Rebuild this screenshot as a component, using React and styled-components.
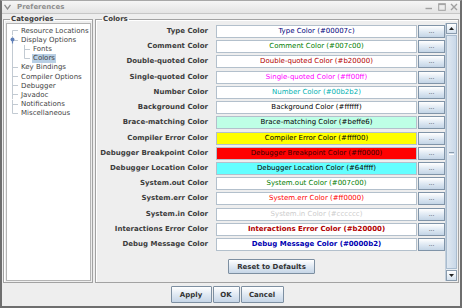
import React from "react";
import styled, { createGlobalStyle } from "styled-components";

const GlobalStyle = createGlobalStyle`
  html, body { margin: 0; padding: 0; background: #ffffff; }
  body { font-family: "DejaVu Sans", sans-serif; }
`;

const categories = [
  { label: "Resource Locations", level: 0, kind: "first" },
  { label: "Display Options", level: 0, kind: "mid", open: true },
  { label: "Fonts", level: 1, kind: "mid" },
  { label: "Colors", level: 1, kind: "last", selected: true },
  { label: "Key Bindings", level: 0, kind: "mid" },
  { label: "Compiler Options", level: 0, kind: "mid" },
  { label: "Debugger", level: 0, kind: "mid" },
  { label: "Javadoc", level: 0, kind: "mid" },
  { label: "Notifications", level: 0, kind: "mid" },
  { label: "Miscellaneous", level: 0, kind: "last" },
];

const colorRows = [
  { label: "Type Color", text: "Type Color (#00007c)", fg: "#00007c" },
  { label: "Comment Color", text: "Comment Color (#007c00)", fg: "#007c00" },
  { label: "Double-quoted Color", text: "Double-quoted Color (#b20000)", fg: "#b20000" },
  { label: "Single-quoted Color", text: "Single-quoted Color (#ff00ff)", fg: "#ff00ff" },
  { label: "Number Color", text: "Number Color (#00b2b2)", fg: "#00b2b2" },
  { label: "Background Color", text: "Background Color (#ffffff)", fg: "#000000" },
  { label: "Brace-matching Color", text: "Brace-matching Color (#beffe6)", fg: "#000000", bg: "#beffe6" },
  { label: "Compiler Error Color", text: "Compiler Error Color (#ffff00)", fg: "#000000", bg: "#ffff00" },
  { label: "Debugger Breakpoint Color", text: "Debugger Breakpoint Color (#ff0000)", fg: "#3a0000", bg: "#ff0000" },
  { label: "Debugger Location Color", text: "Debugger Location Color (#64ffff)", fg: "#000000", bg: "#64ffff" },
  { label: "System.out Color", text: "System.out Color (#007c00)", fg: "#007c00" },
  { label: "System.err Color", text: "System.err Color (#ff0000)", fg: "#ff0000" },
  { label: "System.in Color", text: "System.in Color (#cccccc)", fg: "#cccccc" },
  { label: "Interactions Error Color", text: "Interactions Error Color (#b20000)", fg: "#b20000", bold: true },
  { label: "Debug Message Color", text: "Debug Message Color (#0000b2)", fg: "#0000b2", bold: true },
];

const LINE = "#c2cad2";

function Connector({ kind }) {
  const top = kind === "first" ? 4.5 : 0;
  const bottom = kind === "last" ? 4.5 : 9.2;
  return (
    <svg width="12" height="9.2" viewBox="0 0 12 9.2">
      <line x1="5.5" y1={top} x2="5.5" y2={bottom} stroke={LINE} strokeWidth="1" />
      <line x1="5.5" y1="4.5" x2="11" y2="4.5" stroke={LINE} strokeWidth="1" />
    </svg>
  );
}

function Pass() {
  return (
    <svg width="12" height="9.2" viewBox="0 0 12 9.2">
      <line x1="5.5" y1="0" x2="5.5" y2="9.2" stroke={LINE} strokeWidth="1" />
    </svg>
  );
}

function OpenHandle() {
  return (
    <svg width="12" height="9.2" viewBox="0 0 12 9.2">
      <line x1="5.5" y1="0" x2="5.5" y2="9.2" stroke={LINE} strokeWidth="1" />
      <line x1="5.5" y1="4.5" x2="11" y2="4.5" stroke={LINE} strokeWidth="1" />
      <circle cx="5.5" cy="3.6" r="2" fill="#5f7fb8" />
      <line x1="5.5" y1="4" x2="5.5" y2="7.5" stroke="#5f7fb8" strokeWidth="1.2" />
    </svg>
  );
}

export default function App() {
  return (
    <>
      <GlobalStyle />
      <Window>
        <TitleBar>
          <TitleIcon>
            <svg width="7" height="6" viewBox="0 0 7 6">
              <polyline points="0.5,0.8 3.5,5 6.5,0.8" fill="none" stroke="#8c8c8c" strokeWidth="1.3" />
            </svg>
          </TitleIcon>
          <Title>Preferences</Title>
          <Controls>
            <svg width="8" height="8" viewBox="0 0 8 8">
              <line x1="0.5" y1="5.5" x2="7" y2="5.5" stroke="#a0a0a0" strokeWidth="1.4" />
            </svg>
            <svg width="8" height="8" viewBox="0 0 8 8">
              <rect x="0.7" y="0.7" width="6.6" height="6.6" fill="none" stroke="#a0a0a0" strokeWidth="1" />
              <line x1="0.7" y1="1.6" x2="7.3" y2="1.6" stroke="#a0a0a0" strokeWidth="1" />
            </svg>
            <svg width="8" height="8" viewBox="0 0 8 8">
              <path d="M1 1 L7 7 M7 1 L1 7" stroke="#a0a0a0" strokeWidth="1.4" />
            </svg>
          </Controls>
        </TitleBar>
        <Body>
          <Panels>
            <Group $width="90px">
              <Legend>Categories</Legend>
              <Tree>
                {categories.map((c) => (
                  <TreeRow key={c.label}>
                    {c.level === 1 && <Pass />}
                    {c.open ? <OpenHandle /> : <Connector kind={c.kind} />}
                    <TreeLabel $selected={c.selected}>{c.label}</TreeLabel>
                  </TreeRow>
                ))}
              </Tree>
            </Group>
            <Group $grow>
              <Legend>Colors</Legend>
              <ScrollArea>
                <Pane>
                  <Rows>
                    {colorRows.map((r) => (
                      <React.Fragment key={r.label}>
                        <RowLabel>{r.label}</RowLabel>
                        <Swatch $fg={r.fg} $bg={r.bg} $bold={r.bold}>
                          {r.text}
                        </Swatch>
                        <DotsButton>...</DotsButton>
                      </React.Fragment>
                    ))}
                  </Rows>
                  <ResetRow>
                    <PushButton $w="87px" $h="15px">Reset to Defaults</PushButton>
                  </ResetRow>
                </Pane>
                <ScrollBar>
                  <ArrowButton>
                    <svg width="5" height="3" viewBox="0 0 5 3">
                      <polygon points="0,3 2.5,0 5,3" fill="#222" />
                    </svg>
                  </ArrowButton>
                  <Thumb>
                    <Grip />
                  </Thumb>
                  <ArrowButton>
                    <svg width="5" height="3" viewBox="0 0 5 3">
                      <polygon points="0,0 2.5,3 5,0" fill="#222" />
                    </svg>
                  </ArrowButton>
                </ScrollBar>
              </ScrollArea>
            </Group>
          </Panels>
          <ButtonBar>
            <PushButton $w="41px">Apply</PushButton>
            <PushButton $w="27px">OK</PushButton>
            <PushButton $w="43px">Cancel</PushButton>
          </ButtonBar>
        </Body>
      </Window>
    </>
  );
}

const Window = styled.div`
  width: 462px;
  height: 308px;
  box-sizing: border-box;
  border: 2px solid #6e6e6e;
  border-top: 1px solid #a8a8a8;
  background: #eeeeee;
  display: flex;
  flex-direction: column;
  font-family: "DejaVu Sans", sans-serif;
  font-size: 7px;
  color: #3c3c3c;
`;

const TitleBar = styled.div`
  height: 12px;
  flex: none;
  display: flex;
  align-items: center;
  background: linear-gradient(#f6f6f6, #e4e4e4);
  border-bottom: 1px solid #c6c6c6;
  padding: 0 2px 0 1px;
`;

const TitleIcon = styled.div`
  width: 8px;
  display: flex;
  justify-content: center;
  margin-right: 6px;
`;

const Title = styled.div`
  flex: 1;
  font-weight: bold;
  color: #8e8e8e;
  line-height: 10px;
`;

const Controls = styled.div`
  display: flex;
  gap: 4.5px;
  align-items: center;
`;

const Body = styled.div`
  flex: 1;
  display: flex;
  flex-direction: column;
  padding: 1px 1px 0 1px;
`;

const Panels = styled.div`
  height: 268px;
  display: flex;
  gap: 2px;
`;

const Group = styled.fieldset`
  margin: 0;
  min-width: 0;
  box-sizing: border-box;
  width: ${(p) => p.$width || "auto"};
  flex: ${(p) => (p.$grow ? 1 : "none")};
  border: 1px solid #a2a2a2;
  box-shadow: inset 1px 1px 0 #ffffff;
  padding: 0 1px 1px 2px;
  display: flex;
  flex-direction: column;
`;

const Legend = styled.legend`
  font-weight: bold;
  font-size: 7px;
  line-height: 8px;
  color: #3c3c3c;
  padding: 0 1px;
  margin-left: 4px;
`;

const Tree = styled.div`
  flex: 1;
  background: #ffffff;
  border: 1px solid #b4b4b4;
  padding: 2.5px 0 0 0;
`;

const TreeRow = styled.div`
  height: 9.15px;
  display: flex;
  align-items: center;
  white-space: nowrap;

  svg {
    flex: none;
  }
`;

const TreeLabel = styled.span`
  margin-left: 1px;
  padding: 0 1px;
  line-height: 8.5px;
  color: #444444;
  background: ${(p) => (p.$selected ? "#b8cfe5" : "transparent")};
`;

const ScrollArea = styled.div`
  flex: 1;
  display: flex;
  min-height: 0;
`;

const Pane = styled.div`
  flex: 1;
  display: flex;
  flex-direction: column;
`;

const Rows = styled.div`
  display: grid;
  grid-template-columns: 1fr 201px 27px;
  grid-auto-rows: 13px;
  row-gap: 2.22px;
  column-gap: 1px;
  padding-top: 2px;
`;

const RowLabel = styled.div`
  font-weight: bold;
  color: #3c3c3c;
  text-align: right;
  padding-right: 7px;
  line-height: 13px;
  white-space: nowrap;
`;

const Swatch = styled.div`
  box-sizing: border-box;
  border: 1px solid #b3c0cc;
  background: ${(p) => p.$bg || "#ffffff"};
  color: ${(p) => p.$fg};
  font-weight: ${(p) => (p.$bold ? "bold" : "normal")};
  text-align: center;
  line-height: 11px;
  white-space: nowrap;
  overflow: hidden;
`;

const DotsButton = styled.div`
  box-sizing: border-box;
  border: 1px solid #8094a8;
  background: linear-gradient(#ffffff, #dce7f2 55%, #c4d5e6);
  color: #333333;
  font-size: 6px;
  text-align: center;
  line-height: 9px;
`;

const ResetRow = styled.div`
  display: flex;
  justify-content: center;
  padding-top: 8px;
`;

const PushButton = styled.div`
  box-sizing: border-box;
  width: ${(p) => p.$w};
  height: ${(p) => p.$h || "17px"};
  border: 1px solid #7d8fa1;
  border-radius: 1px;
  background: linear-gradient(#ffffff, #e0e9f3 50%, #c6d6e7);
  font-weight: bold;
  color: #333333;
  display: flex;
  align-items: center;
  justify-content: center;
  white-space: nowrap;
`;

const ScrollBar = styled.div`
  width: 11px;
  flex: none;
  display: flex;
  flex-direction: column;
  background: #e8eef4;
  border-left: 1px solid #c3cfdb;
`;

const ArrowButton = styled.div`
  height: 11px;
  flex: none;
  box-sizing: border-box;
  border: 1px solid #8a9cae;
  background: linear-gradient(#ffffff, #d4e1ee);
  display: flex;
  align-items: center;
  justify-content: center;
`;

const Thumb = styled.div`
  flex: 1;
  margin: 1px 0;
  box-sizing: border-box;
  border: 1px solid #a9bccf;
  background: linear-gradient(90deg, #dfe8f1, #c9d8e8);
  display: flex;
  align-items: center;
  justify-content: center;
`;

const Grip = styled.div`
  width: 5px;
  height: 1px;
  background: #8a9cae;
  box-shadow: 0 2px 0 #ffffff;
`;

const ButtonBar = styled.div`
  flex: 1;
  display: flex;
  justify-content: center;
  align-items: flex-start;
  padding: 3px 8px 0 0;
  gap: 1px;
`;
